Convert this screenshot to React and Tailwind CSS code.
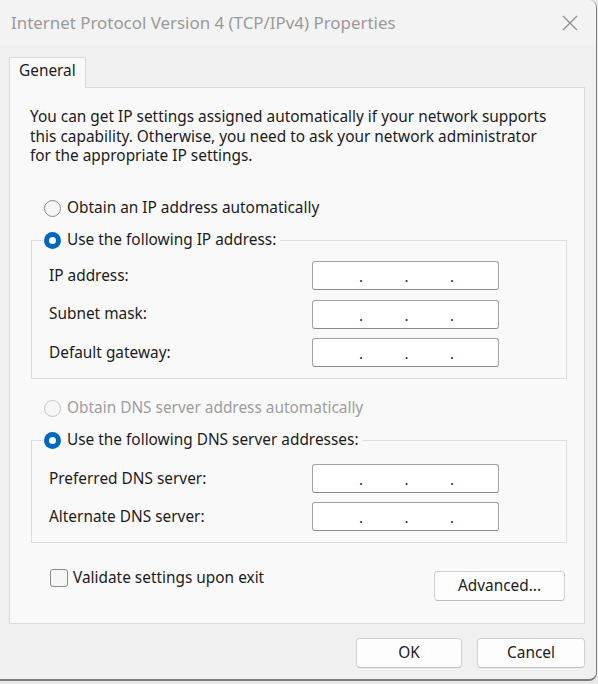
import React from "react";

const font = { fontFamily: '"Noto Sans", "Open Sans", sans-serif' };

function Radio({ checked, disabled }) {
  if (checked) {
    return (
      <span className="flex h-[17px] w-[17px] shrink-0 items-center justify-center rounded-full bg-[#0067c0]">
        <span className="h-[7px] w-[7px] rounded-full bg-white" />
      </span>
    );
  }
  return (
    <span
      className={
        "h-[17px] w-[17px] shrink-0 rounded-full border bg-[#f6f6f6] " +
        (disabled ? "border-[#c4c4c4]" : "border-[#8a8a8a]")
      }
    />
  );
}

function IpInput() {
  return (
    <div className="flex h-[29px] w-[187px] items-center rounded-[3px] border border-[#a3a3a3] border-b-[#8a8a8a] bg-white pl-[46px] text-[15px] leading-none text-[#1b1b1b]">
      <span className="w-[45.5px] translate-y-[1px]">.</span>
      <span className="w-[45.5px] translate-y-[1px]">.</span>
      <span className="w-[45.5px] translate-y-[1px]">.</span>
    </div>
  );
}

function FieldRow({ label }) {
  return (
    <div className="flex h-[29px] items-center">
      <span className="w-[263px] shrink-0">{label}</span>
      <IpInput />
    </div>
  );
}

function Group({ legend, rows, gap, top, bottom }) {
  return (
    <fieldset className={"ml-[21px] w-[536px] border border-[#dcdcdc] px-0 pt-0 " + bottom}>
      <legend className="ml-[11px] flex h-[20px] items-center gap-[6px] pl-[1px] pr-[4px]">
        <Radio checked />
        <span>{legend}</span>
      </legend>
      <div className={"flex flex-col pl-[17px] " + gap + " " + top}>
        {rows.map((r) => (
          <FieldRow key={r} label={r} />
        ))}
      </div>
    </fieldset>
  );
}

export default function App() {
  return (
    <div className="h-[684px] w-[598px] bg-[#e8e8e8]" style={font}>
      <div className="flex h-[681px] w-[597px] flex-col overflow-hidden rounded-br-[8px] rounded-tr-[8px] border-b-2 border-r border-[#7d7d7d] bg-[#f0f0f0] text-[15.4px] text-[#1b1b1b]">
        {/* Title bar */}
        <div className="flex h-[45px] shrink-0 items-center justify-between bg-[#f3f3f3] pl-[11px] pr-[18px]">
          <span className="text-[16.9px] text-[#9a9a9a]">
            Internet Protocol Version 4 (TCP/IPv4) Properties
          </span>
          <svg width="16" height="16" viewBox="0 0 16 16" className="mt-[1px]">
            <path d="M1 1 L15 15 M15 1 L1 15" stroke="#8c8c8c" strokeWidth="1.2" fill="none" />
          </svg>
        </div>

        {/* Tab */}
        <div className="mt-[12px] flex px-[9px]">
          <div className="relative z-10 -mb-px flex h-[31px] w-[77px] items-center border border-b-0 border-[#dadada] bg-[#f9f9f9] pb-[4px] pl-[9px]">
            General
          </div>
        </div>

        {/* Panel */}
        <div className="ml-[9px] flex h-[537px] w-[576px] flex-col border border-[#dadada] bg-[#f9f9f9]">
          <p className="ml-[20px] mt-[19px] h-[60px] leading-[19.5px]">
            You can get IP settings assigned automatically if your network supports
            <br />
            this capability. Otherwise, you need to ask your network administrator
            <br />
            for the appropriate IP settings.
          </p>

          <div className="ml-[34px] mt-[31px] flex h-[20px] items-center gap-[6px]">
            <Radio />
            <span>Obtain an IP address automatically</span>
          </div>

          <div className="mt-[12px]">
            <Group
              legend="Use the following IP address:"
              rows={["IP address:", "Subnet mask:", "Default gateway:"]}
              gap="gap-[9.5px]"
              top="mt-[11px]"
              bottom="pb-[11px]"
            />
          </div>

          <div className="ml-[34px] mt-[19px] flex h-[20px] items-center gap-[6px] text-[#9d9d9d]">
            <Radio disabled />
            <span>Obtain DNS server address automatically</span>
          </div>

          <div className="mt-[12px]">
            <Group
              legend="Use the following DNS server addresses:"
              rows={["Preferred DNS server:", "Alternate DNS server:"]}
              gap="gap-[9px]"
              top="mt-[14px]"
              bottom="pb-[11px]"
            />
          </div>

          <div className="mt-[26px] flex items-start justify-between pl-[40px] pr-[19px]">
            <div className="flex h-[18px] items-center gap-[5px]">
              <span className="h-[18px] w-[18px] shrink-0 rounded-[3px] border border-[#8a8a8a] bg-[#f6f6f6]" />
              <span>Validate settings upon exit</span>
            </div>
            <button className="mt-[2px] h-[30px] w-[131px] rounded-[4px] border border-[#d0d0d0] border-b-[#bdbdbd] bg-[#fdfdfd] text-[#1b1b1b]">
              Advanced...
            </button>
          </div>
        </div>

        {/* Buttons */}
        <div className="mt-[14px] flex justify-end gap-[15px] pr-[11px]">
          <button className="h-[30px] w-[106px] rounded-[4px] border border-[#d0d0d0] border-b-[#bdbdbd] bg-[#fdfdfd] text-[#1b1b1b]">
            OK
          </button>
          <button className="h-[30px] w-[108px] rounded-[4px] border border-[#d0d0d0] border-b-[#bdbdbd] bg-[#fdfdfd] text-[#1b1b1b]">
            Cancel
          </button>
        </div>
      </div>
    </div>
  );
}
